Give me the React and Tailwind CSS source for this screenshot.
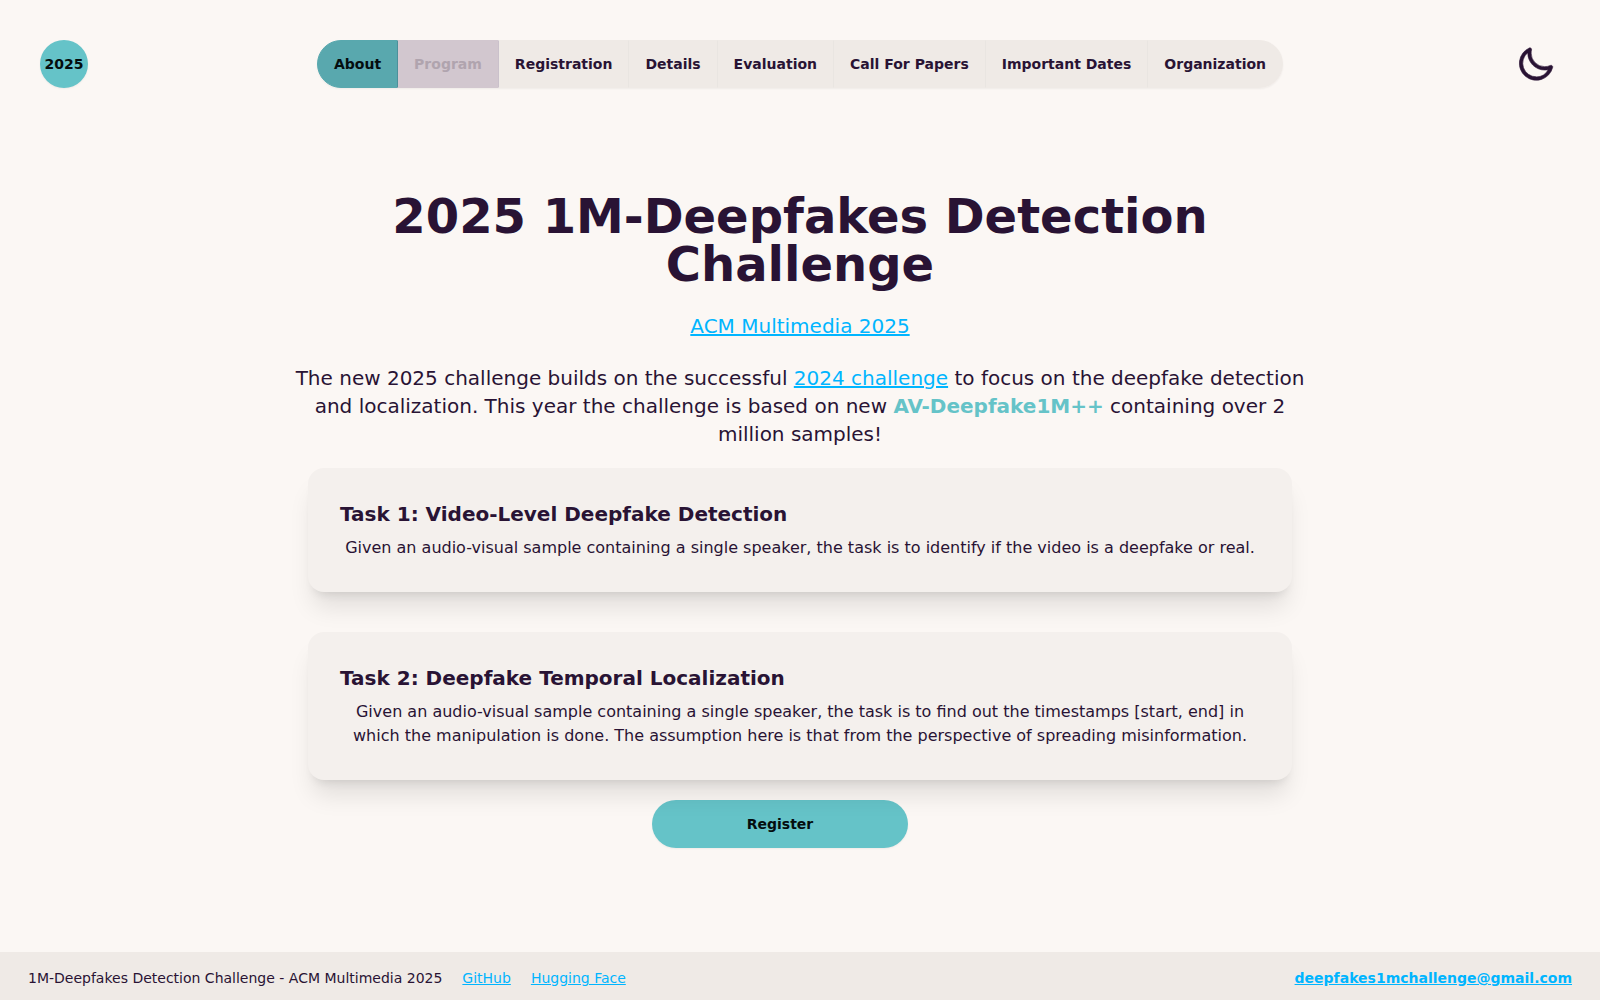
import React from "react";

const NAV = [
  { label: "About", state: "active" },
  { label: "Program", state: "disabled" },
  { label: "Registration", state: "first" },
  { label: "Details" },
  { label: "Evaluation" },
  { label: "Call For Papers" },
  { label: "Important Dates" },
  { label: "Organization" },
];

const TASKS = [
  {
    title: "Task 1: Video-Level Deepfake Detection",
    body: "Given an audio-visual sample containing a single speaker, the task is to identify if the video is a deepfake or real.",
  },
  {
    title: "Task 2: Deepfake Temporal Localization",
    body: "Given an audio-visual sample containing a single speaker, the task is to find out the timestamps [start, end] in which the manipulation is done. The assumption here is that from the perspective of spreading misinformation.",
  },
];

const LINK = "text-[#00b5ff] underline";

// Only the left border shows: each button overlaps the one before it by a pixel.
const NAV_LOOK = {
  active: "bg-[#59a8ae] border-[#59a8ae] text-[#040d0e]",
  disabled: "bg-[#d2c7cf] border-[#d2c7cf] border-l-[#4c909a] text-[#b0a4ae]",
  first: "bg-[#efeae6] border-[#efeae6] border-l-[#cac1cb]",
  normal: "bg-[#efeae6] border-[#efeae6] border-l-[#e9e5e1]",
};

function NavButton({ label, state = "normal" }) {
  return (
    <button
      type="button"
      disabled={state === "disabled"}
      className={`h-12 px-4 border text-sm font-semibold whitespace-nowrap -ml-px first:ml-0 first:rounded-l-full last:rounded-r-full ${NAV_LOOK[state]}`}
    >
      {label}
    </button>
  );
}

function TaskCard({ title, body }) {
  return (
    <section className="relative rounded-2xl bg-[#f4f0ed] p-8 shadow-xl">
      <h2 className="text-xl font-semibold text-left">{title}</h2>
      <p className="mt-2 text-base text-center">{body}</p>
    </section>
  );
}

function MoonIcon() {
  return (
    <svg viewBox="0 0 24 24" className="size-10 fill-current stroke-current" strokeWidth="0.35" aria-hidden="true">
      <path d="M21.64,13a1,1,0,0,0-1.05-.14,8.05,8.05,0,0,1-3.37.73A8.15,8.15,0,0,1,9.08,5.49a8.59,8.59,0,0,1,.25-2A1,1,0,0,0,8,2.36,10.14,10.14,0,1,0,22,14.05,1,1,0,0,0,21.64,13Zm-9.5,6.69A8.14,8.14,0,0,1,7.08,5.22v.27A10.15,10.15,0,0,0,17.22,15.63a9.79,9.79,0,0,0,2.1-.22A8.11,8.11,0,0,1,12.14,19.73Z" />
    </svg>
  );
}

export default function App() {
  return (
    <div className="min-h-screen flex flex-col bg-[#fbf7f4] text-[#291334] font-['Verdana','DejaVu_Sans',sans-serif]">
      <header className="flex items-center justify-between p-10">
        <div className="flex-1">
          <button type="button" className="block size-12 rounded-full bg-[#65c3c8] text-sm font-semibold text-[#040d0e] shadow-xs">
            2025
          </button>
        </div>
        <nav className="flex rounded-full shadow-xs">
          {NAV.map((item) => <NavButton key={item.label} {...item} />)}
        </nav>
        <div className="flex-1 flex justify-end">
          <button type="button" aria-label="Toggle dark mode" className="mr-1"><MoonIcon /></button>
        </div>
      </header>

      <main className="grow flex flex-col items-center justify-center pb-10">
        <div className="w-full max-w-5xl text-center">
          <h1 className="text-5xl leading-none font-bold">2025 1M-Deepfakes Detection Challenge</h1>
          <p className="mt-6 text-xl">
            <a href="#acm" className={LINK}>ACM Multimedia 2025</a>
          </p>
          <p className="mt-6 text-xl">
            The new 2025 challenge builds on the successful <a href="#2024" className={LINK}>2024 challenge</a> to focus on
            the deepfake detection and localization. This year the challenge is based on
            new <strong className="text-[#65c3c8]">AV-Deepfake1M++</strong> containing over 2 million samples!
          </p>
          <div className="mx-5 mt-5 flex flex-col gap-10">
            {TASKS.map((t) => <TaskCard key={t.title} {...t} />)}
          </div>
          <button type="button" className="mt-5 mr-10 h-12 w-64 rounded-full bg-[#65c3c8] text-sm font-semibold text-[#040d0e] shadow-xs">
            Register
          </button>
        </div>
      </main>

      <footer className="flex items-center justify-between bg-[#efeae6] px-7 pt-4 pb-3 text-sm">
        <div className="flex gap-5">
          <span>1M-Deepfakes Detection Challenge - ACM Multimedia 2025</span>
          <a href="#github" className={LINK}>GitHub</a>
          <a href="#huggingface" className={LINK}>Hugging Face</a>
        </div>
        <a href="mailto:deepfakes1mchallenge@gmail.com" className={`font-bold ${LINK}`}>deepfakes1mchallenge@gmail.com</a>
      </footer>
    </div>
  );
}
